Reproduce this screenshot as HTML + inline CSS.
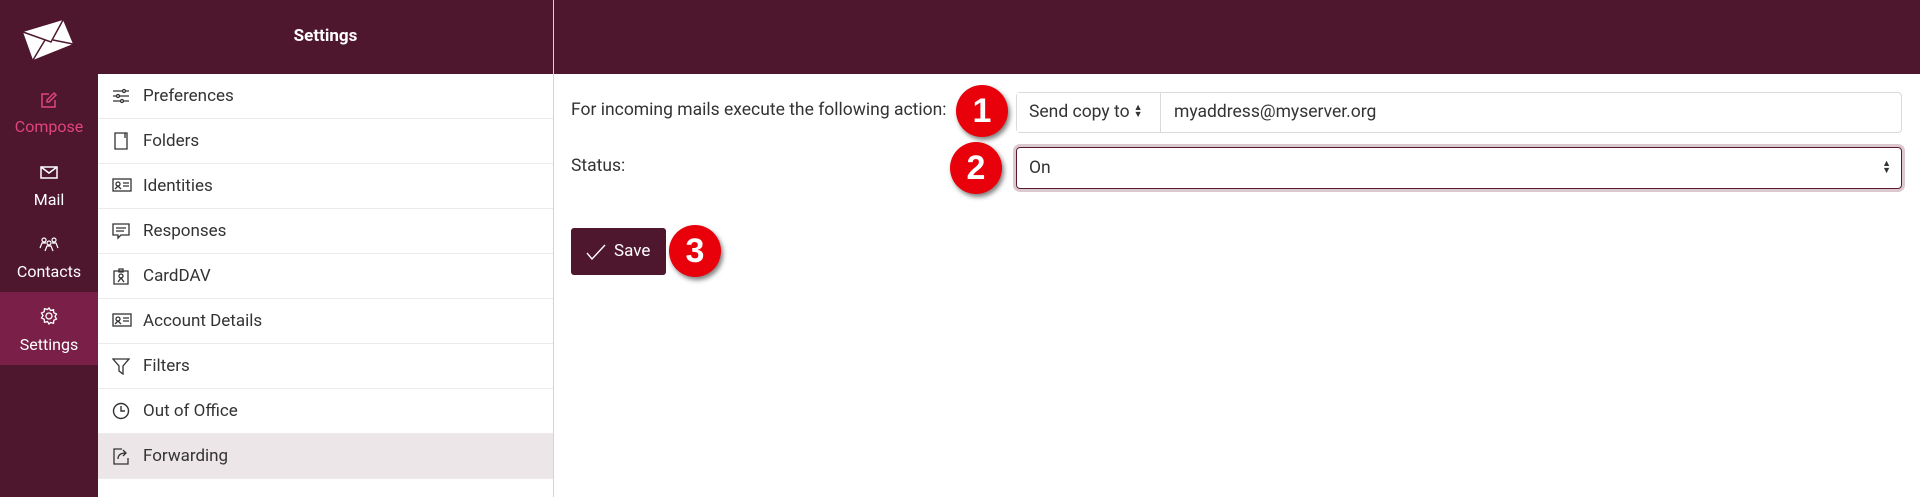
<!DOCTYPE html>
<html><head><meta charset="utf-8"><style>
*{box-sizing:border-box;margin:0;padding:0}
body{width:1920px;height:497px;overflow:hidden;background:#fff;font-family:"Roboto","Liberation Sans",sans-serif;position:relative;color:#333}
.nav{position:absolute;left:0;top:0;width:98px;height:497px;background:#4f172e}
.topbar{position:absolute;left:98px;top:0;width:1822px;height:74px;background:#4f172e}
.sep{position:absolute;left:553px;top:0;width:1px;height:497px;background:#d9d2d5}
.title{position:absolute;left:98px;width:455px;top:26px;text-align:center;color:#fff;font-weight:bold;font-size:17px}
.nl{position:absolute;left:0;width:98px;text-align:center;color:#fff;font-size:16px}
.active{position:absolute;left:0;top:292px;width:98px;height:73px;background:#7a1f48}
.menu{position:absolute;left:98px;top:74px;width:455px}
.row{height:45px;border-bottom:1px solid #eeeaec;position:relative;font-size:17px;color:#333;line-height:44px;padding-left:45px}
.row svg{position:absolute;left:14px;top:13px}
.row.sel{background:#ece6e8}
.lbl{position:absolute;left:571px;font-size:17.5px;color:#333}
.grp{position:absolute;left:1016px;top:92px;width:886px;height:41px;border:1px solid #dcd8da;border-radius:4px}
.grp .a{position:absolute;left:0;top:0;width:144px;height:39px;border-right:1px solid #dcd8da;background:#fff;font-size:17.5px;line-height:39px;padding-left:12px}
.grp .b{position:absolute;left:157px;top:0;font-size:17.5px;line-height:39px}
.stat{position:absolute;left:1016px;top:147px;width:886px;height:42px;border:1px solid #5a1a35;border-radius:4px;box-shadow:0 0 0 3px #dcc9d0;font-size:17.5px;line-height:40px;padding-left:12px}
.arr{display:inline-block;font-size:9px;line-height:7px;vertical-align:middle;margin-left:4px}
.badge{position:absolute;width:52px;height:52px;border-radius:50%;background:#e8000b;color:#fff;font-weight:bold;font-size:34px;text-align:center;line-height:52px;box-shadow:2px 3px 5px rgba(0,0,0,.5);font-family:"Liberation Sans",sans-serif}
.save{position:absolute;left:571px;top:228px;width:95px;height:47px;background:#4f172e;border-radius:3px;color:#fff;font-size:17px;line-height:47px;padding-left:43px}
</style></head><body>
<div class="nav"></div>
<div class="topbar"></div>
<div class="sep"></div>
<svg style="position:absolute;left:21px;top:18px" width="54" height="44" viewBox="0 0 54 44"><path d="M2 14 L42 2 L52 26 L12 42 Z" fill="#fff"/><path d="M2 14 L30 24 L42 2 M12 42 L24 22 M52 26 L32 22" stroke="#4f172e" stroke-width="1.5" fill="none"/></svg>
<div class="title">Settings</div>
<div class="active"></div>
<svg style="position:absolute;left:40px;top:91px" width="18" height="18" viewBox="0 0 18 18" fill="none" stroke="#e0457b" stroke-width="1.5"><path d="M9 3H2v13h13V9"/><path d="M14 2l2 2-7 7H7V9z"/></svg>
<div class="nl" style="top:117px;color:#e0457b">Compose</div>
<svg style="position:absolute;left:40px;top:166px" width="18" height="13" viewBox="0 0 18 13" fill="none" stroke="#fff" stroke-width="1.5"><rect x="1" y="1" width="16" height="11"/><path d="M1 1l8 6 8-6"/></svg>
<div class="nl" style="top:190px">Mail</div>
<svg style="position:absolute;left:39px;top:236px" width="20" height="16" viewBox="0 0 20 16" fill="none" stroke="#fff" stroke-width="1.2"><circle cx="5" cy="4" r="2"/><circle cx="15" cy="4" r="2"/><circle cx="10" cy="7" r="2"/><path d="M1 12l2-5h4M19 12l-2-5h-4M6 15l2-5h4l2 5"/></svg>
<div class="nl" style="top:262px">Contacts</div>
<svg style="position:absolute;left:40px;top:307px" width="18" height="18" viewBox="0 0 18 18" fill="none" stroke="#fff" stroke-width="1.3"><circle cx="9" cy="9" r="3"/><path d="M9 1l1.5 2.5 3-.8.3 3 2.7 1.3-1.5 2.5 1.5 2.5-2.7 1.3-.3 3-3-.8L9 17l-1.5-2.5-3 .8-.3-3L1.5 11 3 8.5 1.5 6l2.7-1.3.3-3 3 .8z"/></svg>
<div class="nl" style="top:335px">Settings</div>

<div class="menu">
<div class="row"><svg width="18" height="18" viewBox="0 0 18 18" fill="none" stroke="#333" stroke-width="1.3"><path d="M1 4h16M1 9h16M1 14h16"/><circle cx="12" cy="4" r="1.5" fill="#fff"/><circle cx="6" cy="9" r="1.5" fill="#fff"/><circle cx="10" cy="14" r="1.5" fill="#fff"/></svg>Preferences</div>
<div class="row"><svg width="18" height="18" viewBox="0 0 18 18" fill="none" stroke="#333" stroke-width="1.3"><path d="M3 1h12v16H3z M13 1v5"/></svg>Folders</div>
<div class="row"><svg width="20" height="16" viewBox="0 0 20 16" fill="none" stroke="#333" stroke-width="1.3"><rect x="1" y="2" width="18" height="12"/><circle cx="6" cy="7" r="2"/><path d="M3 12l3-3 3 3M11 6h6M11 9h6"/></svg>Identities</div>
<div class="row"><svg width="18" height="18" viewBox="0 0 18 18" fill="none" stroke="#333" stroke-width="1.3"><path d="M1 2h16v11H9l-3 3v-3H1z M4 6h10M4 9h8"/></svg>Responses</div>
<div class="row"><svg width="18" height="18" viewBox="0 0 18 18" fill="none" stroke="#333" stroke-width="1.3"><path d="M2 4h14v13H2z M7 2h4v3H7z"/><circle cx="9" cy="9" r="2"/><path d="M6 15l3-4 3 4"/></svg>CardDAV</div>
<div class="row"><svg width="20" height="16" viewBox="0 0 20 16" fill="none" stroke="#333" stroke-width="1.3"><rect x="1" y="2" width="18" height="12"/><circle cx="6" cy="7" r="2"/><path d="M3 12l3-3 3 3M11 6h6M11 9h6"/></svg>Account Details</div>
<div class="row"><svg width="18" height="18" viewBox="0 0 18 18" fill="none" stroke="#333" stroke-width="1.3"><path d="M1 2h16l-6 7v8l-4-3V9z"/></svg>Filters</div>
<div class="row"><svg width="18" height="18" viewBox="0 0 18 18" fill="none" stroke="#333" stroke-width="1.4"><circle cx="9" cy="9" r="7.5"/><path d="M9 4v5h4"/></svg>Out of Office</div>
<div class="row sel"><svg width="18" height="18" viewBox="0 0 18 18" fill="none" stroke="#333" stroke-width="1.3"><path d="M10 2H2v15h14v-6"/><path d="M6 12c0-4 3-6 8-6M11 3l3 3-3 3"/></svg>Forwarding</div>
</div>

<div class="lbl" style="top:100px">For incoming mails execute the following action:</div>
<div class="lbl" style="top:156px">Status:</div>
<div class="grp"><div class="a">Send copy to<span class="arr">&#9650;<br>&#9660;</span></div><div class="b">myaddress@myserver.org</div></div>
<div class="stat">On<span style="position:absolute;right:10px;top:0;font-size:9px;line-height:7px;padding-top:13px">&#9650;<br>&#9660;</span></div>
<div class="badge" style="left:956px;top:85px">1</div>
<div class="badge" style="left:950px;top:142px">2</div>
<div class="save"><svg style="position:absolute;left:15px;top:16px" width="20" height="16" viewBox="0 0 20 16" fill="none" stroke="#fff" stroke-width="1.4"><path d="M1 9l5 6L19 1"/></svg>Save</div>
<div class="badge" style="left:669px;top:225px">3</div>
</body></html>
